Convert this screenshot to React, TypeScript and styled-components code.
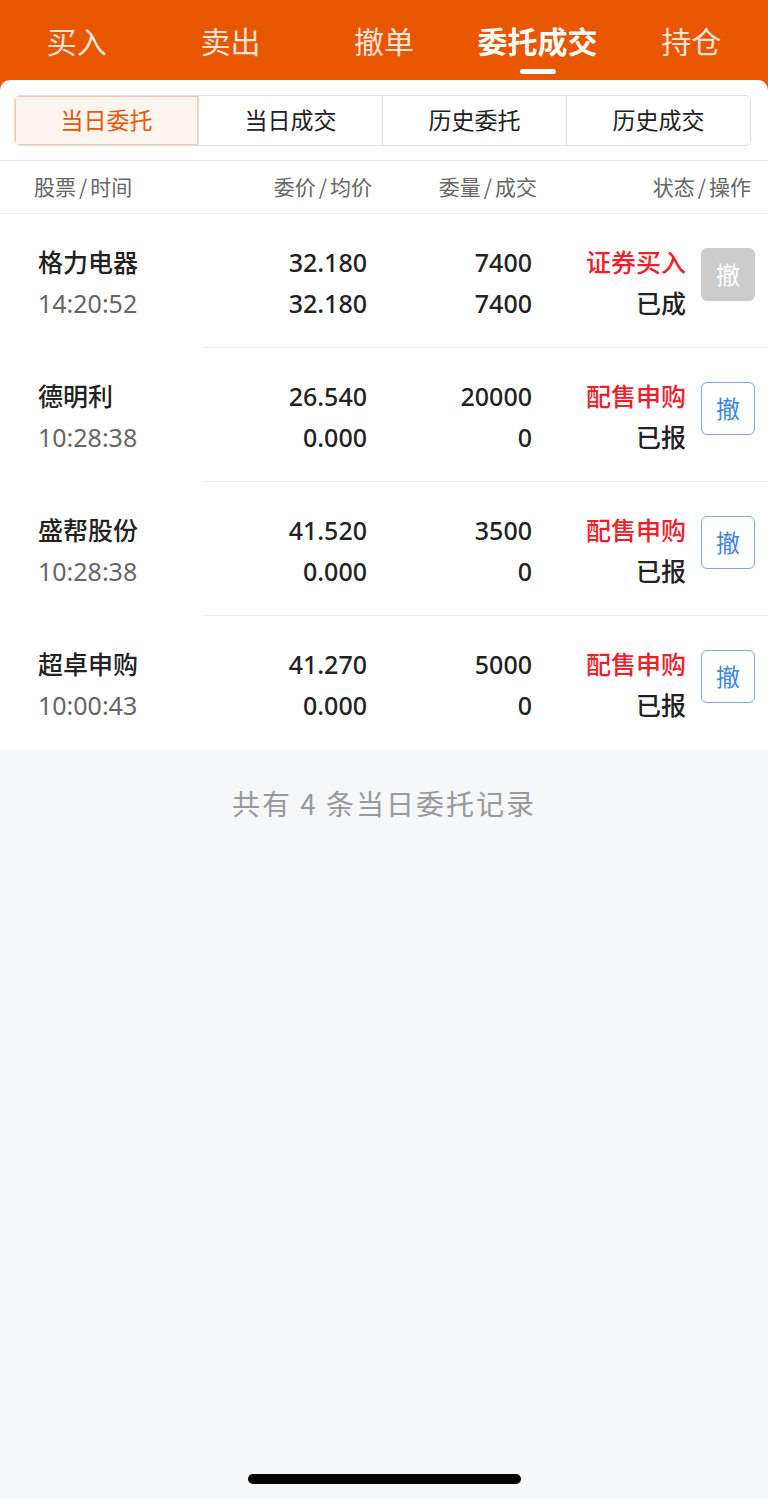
import React from "react";
import styled, { createGlobalStyle } from "styled-components";

const GlobalStyle = createGlobalStyle`
  html, body {
    margin: 0;
    padding: 0;
    background: #f6f7f9;
    font-family: "Noto Sans", "Noto Sans CJK SC", sans-serif;
  }
`;

const Page = styled.div`
  position: relative;
  width: 768px;
  min-height: 1499px;
  background: #f6f7f9;
  overflow: hidden;
`;

const TopBar = styled.div`
  background: #e85600;
  height: 92px;
  display: flex;
  align-items: flex-start;
`;

const TopTab = styled.div<{ $active?: boolean }>`
  flex: 1;
  height: 80px;
  display: flex;
  flex-direction: column;
  align-items: center;
  justify-content: flex-start;
  padding-top: 19px;
  box-sizing: border-box;
  font-family: "Noto Sans CJK SC", sans-serif;
  font-size: 30px;
  line-height: 42px;
  color: ${(p) => (p.$active ? "#ffffff" : "rgba(255,255,255,0.86)")};
  font-weight: ${(p) => (p.$active ? 700 : 400)};
`;

const TabLine = styled.div`
  width: 36px;
  height: 5px;
  border-radius: 3px;
  background: #ffffff;
  margin-top: 8px;
`;

const Panel = styled.div`
  margin-top: -12px;
  background: #ffffff;
  border-radius: 10px 10px 0 0;
`;

const SegWrap = styled.div`
  padding: 15px 17px 14px 14px;
  border-bottom: 1px solid #e6e6e6;
`;

const Segments = styled.div`
  display: flex;
  height: 49px;
  border: 1px solid #dedfe3;
  border-radius: 6px;
  overflow: hidden;
`;

const Segment = styled.div<{ $active?: boolean }>`
  flex: 1;
  display: flex;
  align-items: center;
  justify-content: center;
  padding-bottom: 3px;
  box-sizing: border-box;
  font-family: "Noto Sans CJK SC", sans-serif;
  font-size: 23px;
  color: ${(p) => (p.$active ? "#e85600" : "#222222")};
  background: ${(p) => (p.$active ? "#fcf4ef" : "#ffffff")};
  border-right: 1px solid #dedfe3;
  box-shadow: ${(p) => (p.$active ? "inset 0 0 0 1px #f0c9b2" : "none")};
  &:last-child {
    border-right: none;
  }
`;

const HeadRow = styled.div`
  display: grid;
  grid-template-columns: 200px 138px 165px 214px;
  height: 52px;
  align-items: center;
  padding-left: 34px;
  border-bottom: 1px solid #ececec;
  font-family: "Noto Sans CJK SC", sans-serif;
  font-size: 21px;
  color: #666666;
`;

const HeadCell = styled.div<{ $right?: boolean }>`
  text-align: ${(p) => (p.$right ? "right" : "left")};
  padding-bottom: 3px;
`;

const Slash = styled.span`
  margin: 0 3px;
`;

const Row = styled.div`
  display: flex;
  height: 134px;
  align-items: center;
  padding-left: 38px;
  position: relative;
  &:not(:last-child)::after {
    content: "";
    position: absolute;
    left: 203px;
    right: 0;
    bottom: 0;
    height: 1px;
    background: #efefef;
  }
`;

const Cell = styled.div<{ $w: number; $right?: boolean }>`
  width: ${(p) => p.$w}px;
  display: flex;
  flex-direction: column;
  align-items: ${(p) => (p.$right ? "flex-end" : "flex-start")};
  gap: 4px;
  padding-top: 3px;
`;

const Main = styled.div<{ $red?: boolean }>`
  font-family: "Noto Sans", "Noto Sans CJK SC", sans-serif;
  font-size: 25px;
  line-height: 37px;
  font-weight: 500;
  color: ${(p) => (p.$red ? "#f0202a" : "#222222")};
`;

const Sub = styled.div<{ $grey?: boolean }>`
  font-family: "Noto Sans", "Noto Sans CJK SC", sans-serif;
  font-size: 25px;
  line-height: 37px;
  font-weight: ${(p) => (p.$grey ? 400 : 500)};
  color: ${(p) => (p.$grey ? "#666666" : "#222222")};
`;

const CancelBtn = styled.div<{ $disabled?: boolean }>`
  margin-left: 15px;
  margin-bottom: 14px;
  width: 54px;
  height: 53px;
  box-sizing: border-box;
  border-radius: 6px;
  display: flex;
  align-items: center;
  justify-content: center;
  padding-bottom: 2px;
  font-family: "Noto Sans CJK SC", sans-serif;
  font-size: 24px;
  color: ${(p) => (p.$disabled ? "#ffffff" : "#3f85e0")};
  background: ${(p) => (p.$disabled ? "#cccccc" : "#ffffff")};
  border: 1px solid ${(p) => (p.$disabled ? "#cccccc" : "#7aa8e6")};
`;

const Footer = styled.div`
  text-align: center;
  padding-top: 33px;
  font-family: "Noto Sans CJK SC", sans-serif;
  font-size: 28px;
  color: #999999;
  letter-spacing: 2px;
`;

const HomeBar = styled.div`
  position: absolute;
  left: 248px;
  bottom: 15px;
  width: 273px;
  height: 10px;
  border-radius: 5px;
  background: #000000;
`;

type Order = {
  name: string;
  time: string;
  price: string;
  avg: string;
  qty: string;
  done: string;
  type: string;
  status: string;
  disabled?: boolean;
};

const orders: Order[] = [
  { name: "格力电器", time: "14:20:52", price: "32.180", avg: "32.180", qty: "7400", done: "7400", type: "证券买入", status: "已成", disabled: true },
  { name: "德明利", time: "10:28:38", price: "26.540", avg: "0.000", qty: "20000", done: "0", type: "配售申购", status: "已报" },
  { name: "盛帮股份", time: "10:28:38", price: "41.520", avg: "0.000", qty: "3500", done: "0", type: "配售申购", status: "已报" },
  { name: "超卓申购", time: "10:00:43", price: "41.270", avg: "0.000", qty: "5000", done: "0", type: "配售申购", status: "已报" },
];

const topTabs = ["买入", "卖出", "撤单", "委托成交", "持仓"];
const segs = ["当日委托", "当日成交", "历史委托", "历史成交"];
const heads = [
  ["股票", "时间"],
  ["委价", "均价"],
  ["委量", "成交"],
  ["状态", "操作"],
];

export default function App() {
  return (
    <Page>
      <GlobalStyle />
      <TopBar>
        {topTabs.map((t) => (
          <TopTab key={t} $active={t === "委托成交"}>
            {t}
            {t === "委托成交" && <TabLine />}
          </TopTab>
        ))}
      </TopBar>
      <Panel>
        <SegWrap>
          <Segments>
            {segs.map((s, i) => (
              <Segment key={s} $active={i === 0}>
                {s}
              </Segment>
            ))}
          </Segments>
        </SegWrap>
        <HeadRow>
          {heads.map(([a, b], i) => (
            <HeadCell key={a} $right={i > 0}>
              {a}
              <Slash>/</Slash>
              {b}
            </HeadCell>
          ))}
        </HeadRow>
        {orders.map((o) => (
          <Row key={o.name}>
            <Cell $w={150}>
              <Main>{o.name}</Main>
              <Sub $grey>{o.time}</Sub>
            </Cell>
            <Cell $w={179} $right>
              <Main>{o.price}</Main>
              <Sub>{o.avg}</Sub>
            </Cell>
            <Cell $w={165} $right>
              <Main>{o.qty}</Main>
              <Sub>{o.done}</Sub>
            </Cell>
            <Cell $w={154} $right>
              <Main $red>{o.type}</Main>
              <Sub>{o.status}</Sub>
            </Cell>
            <CancelBtn $disabled={o.disabled}>撤</CancelBtn>
          </Row>
        ))}
      </Panel>
      <Footer>共有 4 条当日委托记录</Footer>
      <HomeBar />
    </Page>
  );
}
